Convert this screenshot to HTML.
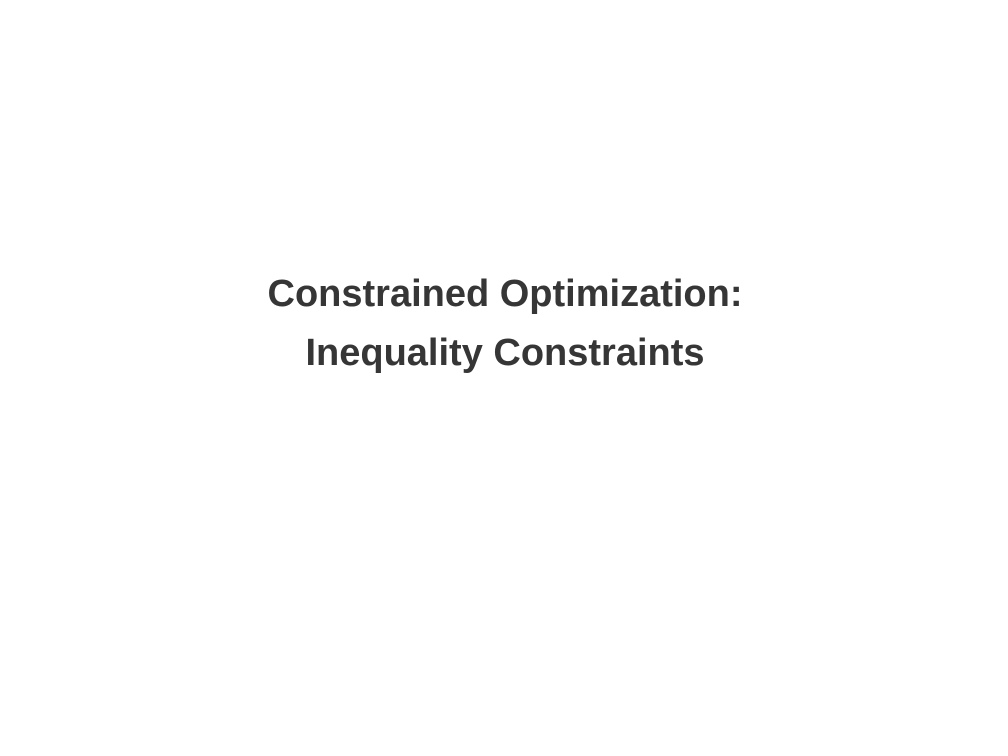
<!DOCTYPE html>
<html><head><style>
html,body{margin:0;padding:0;background:#fff;width:1008px;height:756px;overflow:hidden}
.t{position:absolute;left:0;width:1008px;text-align:center;font-family:"Liberation Sans",sans-serif;font-weight:bold;font-size:38px;color:#363636;line-height:1;}
</style></head><body>
<div class="t" style="top:275px;left:1px">Constrained Optimization:</div>
<div class="t" style="top:334px;left:1px">Inequality Constraints</div>
</body></html>
